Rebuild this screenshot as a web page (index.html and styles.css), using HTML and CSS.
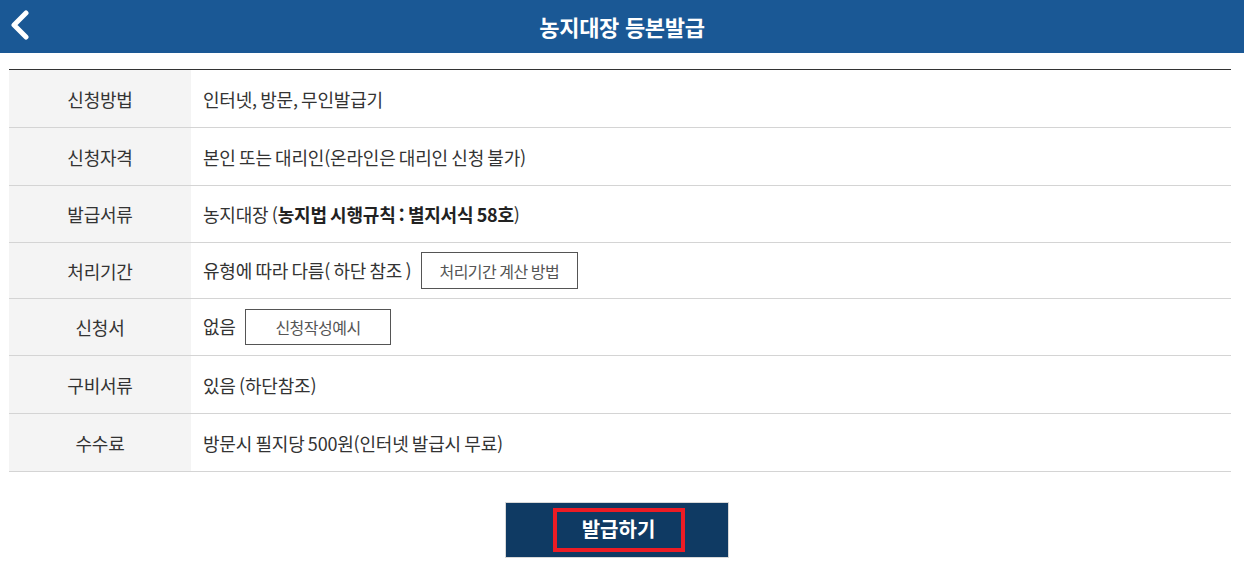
FILE: index.html
```html
<!DOCTYPE html>
<html lang="ko">
<head>
    <meta charset="UTF-8">
    <meta name="viewport" content="width=device-width, initial-scale=1.0">
    <title>농지대장 등본발급</title>
    <link rel="stylesheet" href="styles.css">
</head>
<body>
    <header class="top-bar">
        <a class="back-btn" href="#">
            <svg width="22" height="30" viewBox="0 0 22 30">
                <path d="M17 3 L5 15 L17 27" fill="none" stroke="#fff" stroke-width="5" stroke-linecap="round" stroke-linejoin="round"/>
            </svg>
        </a>
        <h1>농지대장 등본발급</h1>
    </header>

    <div class="container">
        <table class="info-table">
            <tr>
                <th>신청방법</th>
                <td>인터넷, 방문, 무인발급기</td>
            </tr>
            <tr>
                <th>신청자격</th>
                <td>본인 또는 대리인(온라인은 대리인 신청 불가)</td>
            </tr>
            <tr class="row-mid">
                <th>발급서류</th>
                <td>농지대장 (<strong>농지법 시행규칙 : 별지서식 58호</strong>)</td>
            </tr>
            <tr class="row-short">
                <th>처리기간</th>
                <td>유형에 따라 다름( 하단 참조 ) <button class="small-btn wide">처리기간 계산 방법</button></td>
            </tr>
            <tr class="row-mid">
                <th>신청서</th>
                <td>없음 <button class="small-btn">신청작성예시</button></td>
            </tr>
            <tr>
                <th>구비서류</th>
                <td>있음 (하단참조)</td>
            </tr>
            <tr>
                <th>수수료</th>
                <td>방문시 필지당 500원(인터넷 발급시 무료)</td>
            </tr>
        </table>

        <div class="action">
            <button class="issue-btn"><span>발급하기</span></button>
        </div>
    </div>
</body>
</html>
```

FILE: styles.css
```css
body {
    margin: 0;
    font-family: "Noto Sans CJK KR", "Noto Sans", sans-serif;
    color: #333;
    background: #fff;
}

.top-bar {
    height: 53px;
    background: #1a5895;
    position: relative;
    display: flex;
    justify-content: center;
    align-items: center;
}

.top-bar h1 {
    margin: 0 0 2px 0;
    color: white;
    font-size: 22px;
    font-weight: bold;
    letter-spacing: -0.3px;
}

.back-btn {
    position: absolute;
    left: 9px;
    top: 10px;
    display: block;
}

.container {
    padding: 16px 13px 0 9px;
}

.info-table {
    width: 100%;
    border-collapse: collapse;
    border-top: 1px solid #333;
    border-bottom: 1px solid #333;
}

.info-table th,
.info-table td {
    height: 57px;
    padding: 0;
    border-bottom: 1px solid #d4d4d4;
    font-size: 18px;
    letter-spacing: -0.2px;
    word-spacing: -1.5px;
}

.info-table .row-mid th,
.info-table .row-mid td {
    height: 56px;
}

.info-table .row-short th,
.info-table .row-short td {
    height: 55px;
}

.info-table th {
    width: 182px;
    background: #f4f4f4;
    font-weight: normal;
    color: #333;
}

.info-table td {
    padding-left: 12px;
    color: #333;
}

.info-table strong {
    font-weight: bold;
    color: #222;
}

.small-btn {
    height: 36px;
    width: 146px;
    margin-left: 6px;
    background: white;
    border: 1px solid #555;
    font-family: inherit;
    font-size: 16px;
    color: #555;
    letter-spacing: -0.5px;
    word-spacing: -1px;
    cursor: pointer;
}

.small-btn.wide {
    width: 157px;
    height: 37px;
}

.action {
    display: flex;
    justify-content: center;
    padding: 30px 7px 0 0;
}

.issue-btn {
    width: 224px;
    height: 56px;
    background: #0f3a63;
    border: 1px solid #d8d8d8;
    display: flex;
    justify-content: center;
    align-items: center;
    cursor: pointer;
}

.issue-btn span {
    display: block;
    width: 124px;
    height: 36px;
    margin-left: 4px;
    line-height: 34px;
    border: 4px solid #ed1c24;
    color: white;
    font-family: "Noto Sans CJK KR", sans-serif;
    font-size: 20px;
    font-weight: bold;
}
```
